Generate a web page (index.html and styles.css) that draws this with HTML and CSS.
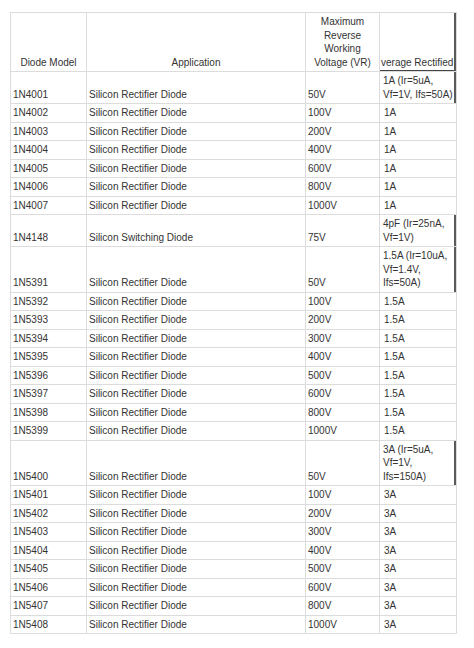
FILE: index.html
```html
<!DOCTYPE html>
<html>
<head>
<meta charset="utf-8">
<link rel="stylesheet" href="styles.css">
</head>
<body>
<table class="spec">
  <colgroup>
    <col class="c1"><col class="c2"><col class="c3"><col class="c4">
  </colgroup>
  <thead>
    <tr>
      <th>Diode Model</th>
      <th>Application</th>
      <th>Maximum Reverse Working Voltage (VR)</th>
      <th class="dark hdr-last">verage Rectified</th>
    </tr>
  </thead>
  <tbody>
    <tr><td>1N4001</td><td>Silicon Rectifier Diode</td><td>50V</td><td class="dark tight">1A (Ir=5uA,<br>Vf=1V, Ifs=50A)</td></tr>
    <tr><td>1N4002</td><td>Silicon Rectifier Diode</td><td>100V</td><td class="v">1A</td></tr>
    <tr><td>1N4003</td><td>Silicon Rectifier Diode</td><td>200V</td><td class="v">1A</td></tr>
    <tr><td>1N4004</td><td>Silicon Rectifier Diode</td><td>400V</td><td class="v">1A</td></tr>
    <tr><td>1N4005</td><td>Silicon Rectifier Diode</td><td>600V</td><td class="v">1A</td></tr>
    <tr><td>1N4006</td><td>Silicon Rectifier Diode</td><td>800V</td><td class="v">1A</td></tr>
    <tr><td>1N4007</td><td>Silicon Rectifier Diode</td><td>1000V</td><td class="v">1A</td></tr>
    <tr><td>1N4148</td><td>Silicon Switching Diode</td><td>75V</td><td class="dark tight">4pF (Ir=25nA,<br>Vf=1V)</td></tr>
    <tr><td>1N5391</td><td>Silicon Rectifier Diode</td><td>50V</td><td class="dark tight">1.5A (Ir=10uA,<br>Vf=1.4V,<br>Ifs=50A)</td></tr>
    <tr><td>1N5392</td><td>Silicon Rectifier Diode</td><td>100V</td><td class="v">1.5A</td></tr>
    <tr><td>1N5393</td><td>Silicon Rectifier Diode</td><td>200V</td><td class="v">1.5A</td></tr>
    <tr><td>1N5394</td><td>Silicon Rectifier Diode</td><td>300V</td><td class="v">1.5A</td></tr>
    <tr><td>1N5395</td><td>Silicon Rectifier Diode</td><td>400V</td><td class="v">1.5A</td></tr>
    <tr><td>1N5396</td><td>Silicon Rectifier Diode</td><td>500V</td><td class="v">1.5A</td></tr>
    <tr><td>1N5397</td><td>Silicon Rectifier Diode</td><td>600V</td><td class="v">1.5A</td></tr>
    <tr><td>1N5398</td><td>Silicon Rectifier Diode</td><td>800V</td><td class="v">1.5A</td></tr>
    <tr><td>1N5399</td><td>Silicon Rectifier Diode</td><td>1000V</td><td class="v">1.5A</td></tr>
    <tr><td>1N5400</td><td>Silicon Rectifier Diode</td><td>50V</td><td class="dark tight">3A (Ir=5uA,<br>Vf=1V,<br>Ifs=150A)</td></tr>
    <tr><td>1N5401</td><td>Silicon Rectifier Diode</td><td>100V</td><td class="v">3A</td></tr>
    <tr><td>1N5402</td><td>Silicon Rectifier Diode</td><td>200V</td><td class="v">3A</td></tr>
    <tr><td>1N5403</td><td>Silicon Rectifier Diode</td><td>300V</td><td class="v">3A</td></tr>
    <tr><td>1N5404</td><td>Silicon Rectifier Diode</td><td>400V</td><td class="v">3A</td></tr>
    <tr><td>1N5405</td><td>Silicon Rectifier Diode</td><td>500V</td><td class="v">3A</td></tr>
    <tr><td>1N5406</td><td>Silicon Rectifier Diode</td><td>600V</td><td class="v">3A</td></tr>
    <tr><td>1N5407</td><td>Silicon Rectifier Diode</td><td>800V</td><td class="v">3A</td></tr>
    <tr><td>1N5408</td><td>Silicon Rectifier Diode</td><td>1000V</td><td class="v">3A</td></tr>
  </tbody>
</table>
</body>
</html>
```

FILE: styles.css
```css
html, body {
  background: #ffffff;
}
body {
  margin: 12px 0 0 10px;
  font-family: "Liberation Sans", Arial, sans-serif;
  font-size: 10px;
  color: #333333;
}
.spec {
  width: 446px;
  table-layout: fixed;
  border-collapse: collapse;
}
.c1 { width: 76px; }
.c2 { width: 219px; }
.c3 { width: 74px; }
.c4 { width: 77px; }
.spec th,
.spec td {
  border: 1px solid #dcdcdc;
  padding: 2px 2px 2px 2px;
  line-height: 13.5px;
  vertical-align: bottom;
  text-align: left;
  font-weight: normal;
  white-space: nowrap;
  overflow: hidden;
}
.spec th {
  text-align: center;
  white-space: normal;
}
.spec th.hdr-last {
  text-align: left;
  padding-left: 1px;
  box-shadow: inset -2px 0 0 #5a5a5a, inset 0 -1px 0 #444444;
}
.spec td.v {
  padding-left: 4px;
}
.spec td.tight {
  padding-left: 3px;
  padding-right: 0;
}
.spec td.dark {
  box-shadow: inset -2px 0 0 #5a5a5a;
}
```
